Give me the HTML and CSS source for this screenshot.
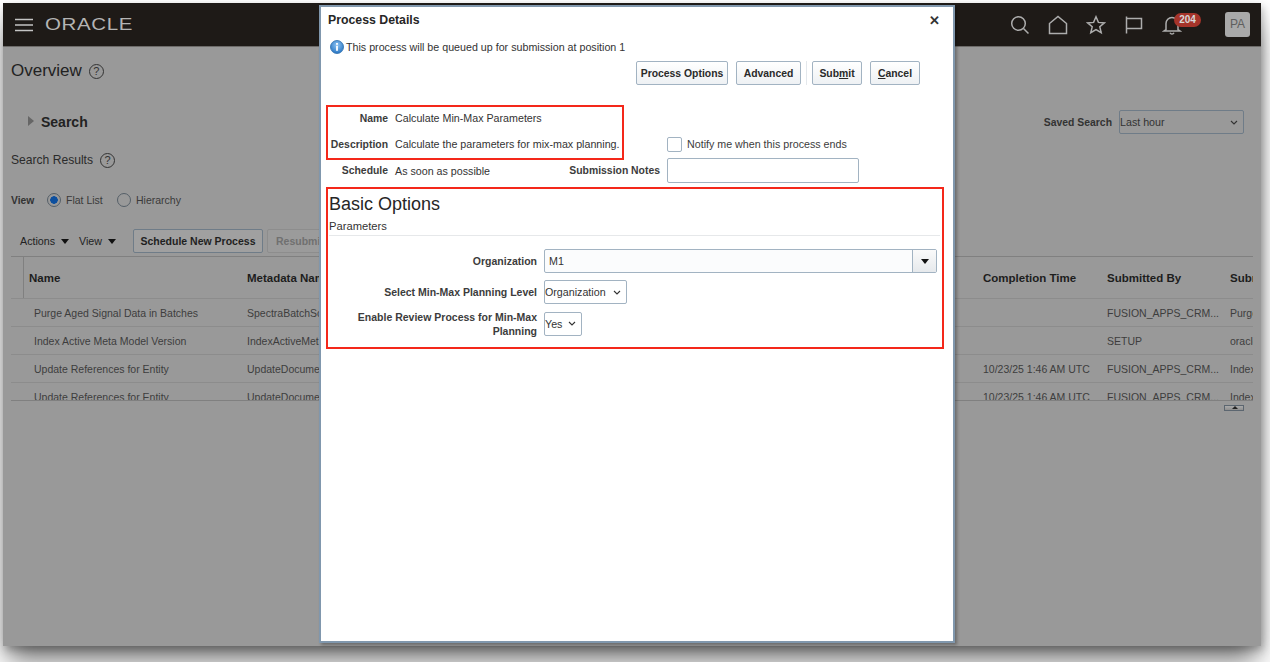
FILE: index.html
```html
<!DOCTYPE html>
<html lang="en">
<head>
<meta charset="utf-8">
<title>Overview</title>
<link rel="stylesheet" href="styles.css">
</head>
<body>
<div class="window">
  <header class="topbar">
    <svg class="burger" width="18" height="14" viewBox="0 0 18 14"><path d="M0 1.500h18M0 7h18M0 12.500h18" stroke="#c4c4c4" stroke-width="1.600"/></svg>
    <span class="logo">ORACLE</span>
    <div class="top-icons">
      <svg class="ico" width="20" height="20" viewBox="0 0 20 20"><circle cx="8.500" cy="8.500" r="6.800" fill="none" stroke="#adadad" stroke-width="1.500"/><path d="M13.500 13.500l5 5" stroke="#adadad" stroke-width="1.500"/></svg>
      <svg class="ico" width="20" height="20" viewBox="0 0 20 20"><path d="M1.500 8.500L10 1.500l8.500 7v10h-17z" fill="none" stroke="#adadad" stroke-width="1.500"/></svg>
      <svg class="ico" width="20" height="20" viewBox="0 0 20 20"><path d="M10 1.800l2.400 5.600 6 .5-4.600 3.900 1.400 5.900-5.200-3.100-5.200 3.100 1.400-5.900-4.600-3.900 6-.5z" fill="none" stroke="#adadad" stroke-width="1.500"/></svg>
      <svg class="ico" width="20" height="20" viewBox="0 0 20 20"><path d="M2.500 1.500v17M2.500 3.500h15v10h-15" fill="none" stroke="#adadad" stroke-width="1.500"/></svg>
      <div class="bell-wrap">
        <svg class="ico" width="20" height="20" viewBox="0 0 20 20"><path d="M4 14.500V8.500a6 6 0 0 1 12 0v6l2 1.500H2zM8 17.800a2.200 2.200 0 0 0 4 0" fill="none" stroke="#adadad" stroke-width="1.500"/></svg>
        <span class="badge">204</span>
      </div>
    </div>
    <span class="avatar">PA</span>
  </header>

  <main class="page">
    <h1 class="page-title">Overview <span class="help help-lg">?</span></h1>
    <div class="search-row">
      <div class="search-head"><span class="tri-right"></span><span class="search-word">Search</span></div>
      <div class="saved"><span class="saved-label">Saved Search</span>
        <span class="pick pick-saved">Last hour<svg class="chev" width="8" height="5" viewBox="0 0 8 5"><path d="M1 1l3 3 3-3" fill="none" stroke="#333" stroke-width="1.100"/></svg></span>
      </div>
    </div>
    <h2 class="results-title">Search Results <span class="help">?</span></h2>
    <div class="view-row">
      <b class="view-label">View</b>
      <span class="radio radio-on"></span><span class="view-opt">Flat List</span>
      <span class="radio"></span><span class="view-opt">Hierarchy</span>
    </div>
    <div class="toolbar">
      <span class="menu">Actions<i class="tri-down"></i></span>
      <span class="menu">View<i class="tri-down"></i></span>
      <span class="tool-btn">Schedule New Process</span>
      <span class="tool-btn tool-off">Resubmit</span>
    </div>
    <div class="table">
      <div class="tr th">
        <span class="stub"></span><span class="cell-name">Name</span><span>Metadata Name</span><span></span><span>Completion Time</span><span>Submitted By</span><span>Submission</span>
      </div>
      <div class="tr">
        <span></span><span class="cell-name">Purge Aged Signal Data in Batches</span><span>SpectraBatchScheduler</span><span></span><span></span><span>FUSION_APPS_CRM...</span><span>Purge</span>
      </div>
      <div class="tr">
        <span></span><span class="cell-name">Index Active Meta Model Version</span><span>IndexActiveMetaModel</span><span></span><span></span><span>SETUP</span><span>oracle</span>
      </div>
      <div class="tr">
        <span></span><span class="cell-name">Update References for Entity</span><span>UpdateDocumentRefs</span><span></span><span>10/23/25 1:46 AM UTC</span><span>FUSION_APPS_CRM...</span><span>Index</span>
      </div>
      <div class="tr">
        <span></span><span class="cell-name">Update References for Entity</span><span>UpdateDocumentRefs</span><span></span><span>10/23/25 1:46 AM UTC</span><span>FUSION_APPS_CRM...</span><span>Index</span>
      </div>
    </div>
    <div class="splitter-row"><span class="splitter"></span></div>
  </main>

  <section class="dialog">
    <div class="dlg-title"><span>Process Details</span><span class="close">&#10005;</span></div>
    <div class="dlg-info">
      <svg width="14" height="14" viewBox="0 0 14 14"><defs><radialGradient id="ig" cx="50%" cy="35%" r="70%"><stop offset="0" stop-color="#8fc4f2"/><stop offset="1" stop-color="#1f6fc0"/></radialGradient></defs><circle cx="7" cy="7" r="6.500" fill="url(#ig)" stroke="#2a6cab" stroke-width=".8"/><rect x="6.100" y="5.800" width="1.800" height="5" fill="#fff"/><rect x="6.100" y="3" width="1.800" height="1.800" fill="#fff"/></svg>
      <span>This process will be queued up for submission at position 1</span>
    </div>
    <div class="dlg-actions">
      <span class="btn btn-po">Process Options</span>
      <span class="btn btn-adv">Advanced</span>
      <span class="sep"></span>
      <span class="btn btn-sub">Sub<u>m</u>it</span>
      <span class="btn btn-can"><u>C</u>ancel</span>
    </div>
    <div class="summary">
      <div class="callout-sm"></div>
      <span class="lab">Name</span><span class="val">Calculate Min-Max Parameters</span><span></span><span></span>
      <span class="lab">Description</span><span class="val">Calculate the parameters for mix-max planning.</span><span></span>
      <span class="notify"><span class="check"></span>Notify me when this process ends</span>
      <span class="lab">Schedule</span><span class="val">As soon as possible</span><span class="lab">Submission Notes</span><span class="note-box"></span>
    </div>
    <div class="basic">
      <div class="basic-title">Basic Options</div>
      <div class="params">Parameters</div>
      <div class="param-form">
        <label class="plab">Organization</label>
        <div class="combo"><span class="combo-val">M1</span><span class="combo-btn"><i class="tri-black"></i></span></div>
        <label class="plab">Select Min-Max Planning Level</label>
        <div class="pick-cell"><span class="pick pick-org">Organization<svg class="chev" width="8" height="5" viewBox="0 0 8 5"><path d="M1 1l3 3 3-3" fill="none" stroke="#333" stroke-width="1.100"/></svg></span></div>
        <label class="plab plab-two">Enable Review Process for Min-Max Planning</label>
        <div class="pick-cell"><span class="pick pick-yes">Yes<svg class="chev" width="8" height="5" viewBox="0 0 8 5"><path d="M1 1l3 3 3-3" fill="none" stroke="#333" stroke-width="1.100"/></svg></span></div>
      </div>
    </div>
  </section>
</div>
</body>
</html>
```
FILE: styles.css
```css
* { box-sizing: border-box; }
html, body { margin: 0; height: 100%; overflow: hidden; background: #fff; }
body { padding: 3px 0 0 3px; font-family: "Liberation Sans", Arial, sans-serif; font-size: 10.7px; color: #333; }
.window { position: relative; width: 1258px; height: 643px; background: #999; box-shadow: 0 18px 26px -4px rgba(0,0,0,.55), 2px 4px 8px rgba(0,0,0,.25); }

.topbar { height: 44px; background: #1e1a17; border-bottom: 1px solid #6d6b69; display: flex; align-items: center; padding: 0 11px 0 12px; }
.burger { flex: none; }
.logo { margin-left: 12px; color: #b4b4b4; font-size: 16px; letter-spacing: .5px; line-height: 1; display: inline-block; width: 68px; transform: scaleX(1.28); transform-origin: left center; white-space: nowrap; }
.top-icons { margin-left: auto; display: flex; gap: 18px; align-items: center; margin-right: 43px; }
.ico { display: block; }
.bell-wrap { position: relative; }
.badge { position: absolute; left: 12px; top: -2px; width: 27px; height: 14px; border-radius: 7px; background: #a5342a; color: #d8d8d8; font-size: 10px; font-weight: bold; line-height: 14px; text-align: center; }
.avatar { width: 25px; height: 25px; background: #a9a9a9; border-radius: 3px; color: #5e5e5e; font-size: 12px; line-height: 25px; text-align: center; }

.page { padding: 0 8px; }
.page-title { margin: 0; height: 48px; font-size: 17px; font-weight: normal; color: #222; line-height: 22px; display: flex; align-items: center; gap: 7px; }
.help { display: inline-block; width: 15px; height: 15px; border: 1px solid #333; border-radius: 50%; font-size: 11px; line-height: 13px; text-align: center; color: #333; font-weight: normal; }
.search-row { display: flex; justify-content: space-between; align-items: center; height: 24px; margin-top: 15px; }
.search-head { display: flex; align-items: center; padding-left: 17px; }
.tri-right { width: 0; height: 0; border-left: 6px solid #666; border-top: 5px solid transparent; border-bottom: 5px solid transparent; margin-top: -3px; }
.search-word { margin-left: 7px; font-size: 14px; font-weight: bold; color: #222; }
.saved { display: flex; align-items: center; gap: 7px; padding-right: 9px; }
.saved-label { font-weight: bold; color: #333; font-size: 10.4px; }
.pick { display: inline-flex; align-items: center; justify-content: space-between; height: 24px; border: 1px solid #6f7c88; border-radius: 2px; padding: 0 5px 0 0; color: #333; }
.pick-saved { width: 125px; }
.results-title { margin: 16px 0 0; height: 20px; font-size: 12.100px; font-weight: normal; color: #2b2b2b; line-height: 20px; display: flex; align-items: center; gap: 7px; }
.view-row { display: flex; align-items: center; height: 16px; margin-top: 22px; font-size: 10.5px; }
.view-label { color: #333; width: 36px; font-size: 10.3px; }
.radio { width: 14px; height: 14px; border: 1px solid #555f68; border-radius: 50%; flex: none; }
.radio-on { background: radial-gradient(circle, #0d4f9e 0 3.500px, transparent 4px); }
.view-opt { min-width: 42px; margin: 0 9px 0 5px; color: #3a3a3a; }
.toolbar { display: flex; align-items: center; height: 24px; margin-top: 21px; padding-left: 9px; font-size: 10.700px; }
.menu { display: inline-flex; align-items: center; color: #222; width: 59px; }
.menu + .menu { width: 54px; }
.tri-down { width: 0; height: 0; border-top: 5px solid #111; border-left: 4px solid transparent; border-right: 4px solid transparent; margin-left: 6px; margin-top: 1px; }
.tool-btn { width: 130px; height: 24px; line-height: 22px; text-align: center; font-weight: bold; font-size: 10.500px; color: #1f1f1f; border: 1px solid #6f7c88; border-radius: 2px; background: #a0a0a0; }
.tool-off { margin-left: 4px; width: 70px; color: #707070; border-color: #8d8d8d; background: #9b9b9b; text-align: left; padding-left: 8px; }

.table { margin-top: 3px; height: 145px; overflow: hidden; border-top: 1px solid #808080; border-bottom: 1px solid #808080; }
.tr { display: grid; grid-template-columns: 13px 223px 120px 616px 124px 123px 23px; height: 28px; align-items: center; border-bottom: 1px solid #8c8c8c; color: #3d3d3d; white-space: nowrap; font-size: 10.500px; }
.tr > span { overflow: hidden; min-width: 0; line-height: 14px; }
.th { height: 42px; font-weight: bold; font-size: 11.500px; color: #1d1d1d; }
.th .stub { height: 100%; border-right: 1px solid #808080; }
.th .cell-name { padding-left: 5px; }
.cell-name { padding-left: 10px; }
.splitter-row { display: flex; justify-content: flex-end; padding: 4px 9px 0 0; }
.splitter { width: 20px; height: 6px; border: 1px solid #5c6670; background: linear-gradient(#aaa, #8e8e8e); position: relative; }
.splitter::after { content: ""; position: absolute; left: 7px; top: 0; border-bottom: 3px solid #222; border-left: 3px solid transparent; border-right: 3px solid transparent; }

.dialog { position: absolute; left: 316px; top: 2px; width: 636px; height: 638px; background: #fff; border: 2px solid #8097ad; box-shadow: 2px 2px 3px rgba(0,0,0,.3); padding: 0 5px; }
.dlg-title { display: flex; justify-content: space-between; align-items: center; height: 26px; padding: 0 8px 0 2px; font-size: 12.300px; font-weight: bold; color: #262626; }
.close { font-size: 13px; color: #333; }
.dlg-info { display: flex; align-items: center; gap: 2px; height: 14px; margin-top: 7px; padding-left: 4px; color: #333; }
.dlg-info svg { flex: none; }
.dlg-actions { display: flex; align-items: center; height: 24px; margin-top: 7px; padding-left: 310px; }
.btn { height: 24px; line-height: 23px; text-align: center; font-weight: bold; color: #2a2a2a; border: 1px solid #a2b3c2; border-radius: 2px; background: linear-gradient(#fff, #eef1f4); font-size: 10.400px; }
.btn-po { width: 92px; }
.btn-adv { width: 65px; margin-left: 8px; }
.sep { width: 1px; height: 24px; background: #e4e8ec; margin: 0 5px; }
.btn-sub { width: 50px; }
.btn-can { width: 50px; margin-left: 8px; }

.summary { position: relative; display: grid; grid-template-columns: 62px 160px 98px 192px; column-gap: 7px; grid-template-rows: 26px 26px 27px; align-items: center; margin-top: 20px; white-space: nowrap; }
.callout-sm { position: absolute; left: 0; top: 0; width: 298px; height: 55px; border: 2px solid #f4281a; pointer-events: none; }
.lab { text-align: right; font-weight: bold; font-size: 10.400px; color: #3c3c3c; }
.val { color: #333; }
.notify { display: flex; align-items: center; gap: 5px; color: #3c3c3c; }
.check { width: 15px; height: 15px; border: 1px solid #a2b3c2; border-radius: 2px; flex: none; }
.note-box { height: 25px; border: 1px solid #a2b3c2; border-radius: 2px; }

.basic { width: 618px; height: 162px; margin-top: 3px; border: 2px solid #f4281a; padding: 0 1px; }
.basic-title { height: 22px; margin-top: 4px; font-size: 18px; line-height: 22px; color: #262626; }
.params { height: 19px; line-height: 14px; font-size: 11.200px; color: #333; border-bottom: 1px solid #e6e8ea; padding-top: 2px; margin: 2px 1px 0 0; }
.param-form { display: grid; grid-template-columns: 208px 393px; column-gap: 7px; grid-template-rows: 24px 24px 25px; row-gap: 7px; align-items: center; margin-top: 13px; }
.plab { text-align: right; font-weight: bold; font-size: 10.500px; color: #3c3c3c; line-height: 14px; }
.plab-two { padding-top: 1px; }
.combo { display: flex; height: 24px; border: 1px solid #a2b3c2; border-radius: 2px; background: #fbfcfd; }
.combo-val { flex: 1; padding-left: 4px; line-height: 22px; }
.combo-btn { width: 24px; border-left: 1px solid #a2b3c2; background: linear-gradient(#fafafa, #e6e9ec); display: flex; align-items: center; justify-content: center; }
.tri-black { width: 0; height: 0; border-top: 5px solid #111; border-left: 4px solid transparent; border-right: 4px solid transparent; }
.pick-cell { display: flex; }
.pick-org { width: 83px; border-color: #a2b3c2; }
.pick-yes { width: 38px; border-color: #a2b3c2; }
```
